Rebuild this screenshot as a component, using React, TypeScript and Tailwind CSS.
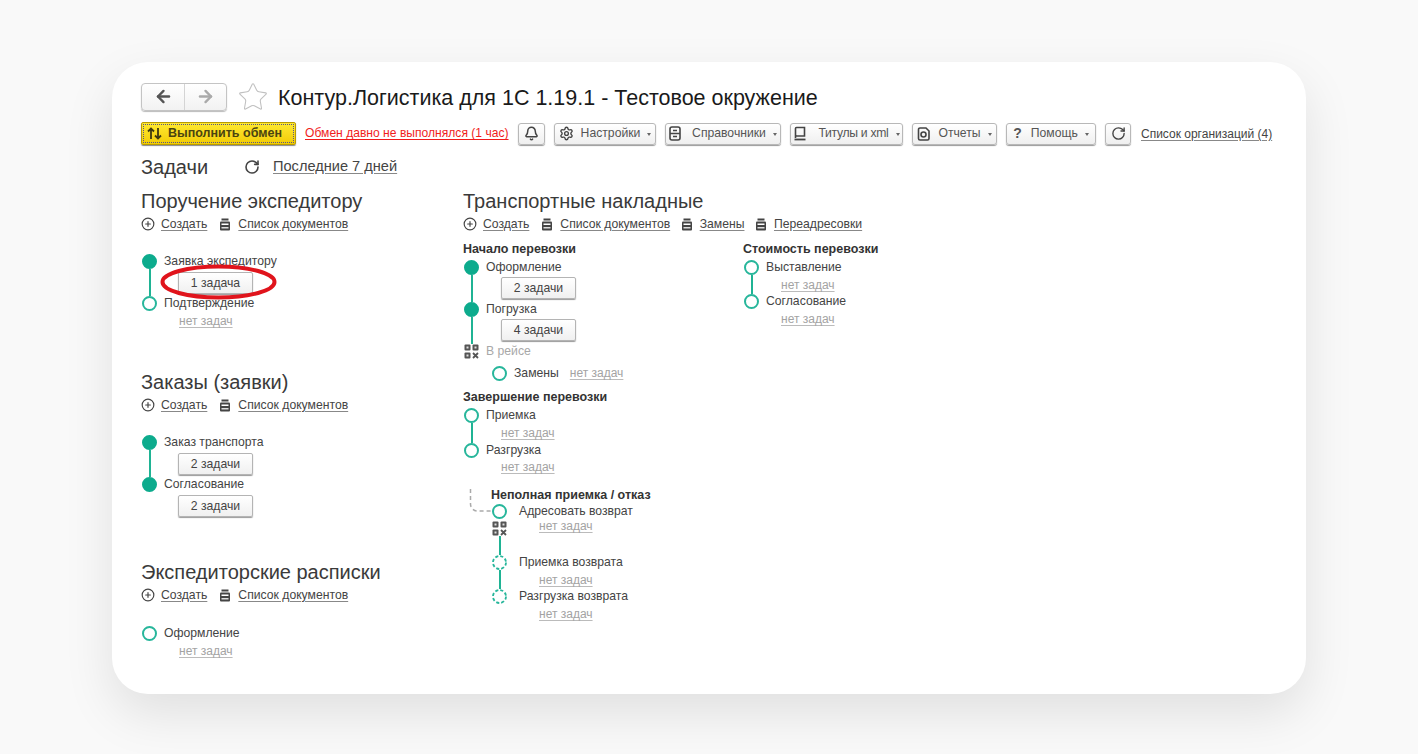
import { ArrowLeft, ArrowRight, Bell, CirclePlus, RotateCw, Settings, Star } from "lucide-react";
import type { ReactNode } from "react";

const DocsIcon = () => (
  <svg width="12" height="13" viewBox="0 0 12 13" className="shrink-0" fill="none">
    <rect x="2.5" y="0.5" width="7" height="2" fill="#444" />
    <rect x="1" y="3.5" width="10" height="9" rx="1" fill="#444" />
    <rect x="2.5" y="5.5" width="7" height="1.5" fill="#fff" />
    <rect x="2.5" y="9" width="7" height="1.5" fill="#ddd" />
  </svg>
);

const BookIcon = () => (
  <svg width="14" height="15" viewBox="0 0 14 15" fill="none" stroke="#444" strokeWidth="1.6" className="shrink-0">
    <path d="M2.5 12V2.5a1 1 0 0 1 1-1h8V10h-8a1 1 0 0 0-1 1.2" />
    <path d="M1.5 13.5h11" strokeWidth="1.8" />
  </svg>
);

const CabinetIcon = () => (
  <svg width="12" height="15" viewBox="0 0 12 15" fill="none" className="shrink-0">
    <rect x="1" y="1" width="10" height="13" rx="2" stroke="#444" strokeWidth="1.6" />
    <path d="M1 7.5h10M4 4.5h4M4 10.5h4" stroke="#444" strokeWidth="1.5" />
  </svg>
);

const ReportIcon = () => (
  <svg width="13" height="14" viewBox="0 0 13 14" fill="none" className="shrink-0">
    <path d="M3 1h6l3 3v7.5a1.500 1.500 0 0 1-1.500 1.500h-7.500a1.500 1.500 0 0 1-1.500-1.500v-9a1.500 1.500 0 0 1 1.500-1.500z" stroke="#444" strokeWidth="1.600" />
    <circle cx="6.500" cy="7.500" r="2.500" stroke="#444" strokeWidth="1.600" />
  </svg>
);

const ExchangeIcon = () => (
  <svg width="15" height="13" viewBox="0 0 15 13" fill="none" stroke="#3f3a10" strokeWidth="1.800" className="shrink-0">
    <path d="M4 12V1.500M1 4.500l3-3 3 3" />
    <path d="M11 1v10.500M8 8.500l3 3 3-3" />
  </svg>
);

const QrIcon = () => (
  <svg width="15" height="15" viewBox="0 0 15 15" fill="none" className="shrink-0">
    <g fill="#555">
      <rect x="0.500" y="0.500" width="6" height="6" rx="1" />
      <rect x="8.500" y="0.500" width="6" height="6" rx="1" />
      <rect x="0.500" y="8.500" width="6" height="6" rx="1" />
    </g>
    <g fill="#ddd">
      <rect x="2.500" y="2.500" width="2" height="2" />
      <rect x="10.500" y="2.500" width="2" height="2" />
      <rect x="2.500" y="10.500" width="2" height="2" />
    </g>
    <path d="M9 9l5 5M14 9l-5 5" stroke="#555" strokeWidth="1.800" />
  </svg>
);

const DashedRing = () => (
  <svg width="15" height="15" viewBox="0 0 15 15" fill="none" className="shrink-0">
    <circle cx="7.500" cy="7.500" r="6.500" stroke="#27b69b" strokeWidth="1.800" strokeDasharray="3.100 2" />
  </svg>
);

const Caret = () => <span className="ml-[7px] mt-[1px] h-0 w-0 border-x-[2.5px] border-t-[3px] border-x-transparent border-t-[#666]" />;

const ToolButton = ({
  icon,
  label,
  w,
  gap = "ml-[8px]",
}: {
  icon: ReactNode;
  label?: string;
  w: string;
  gap?: string;
}) => (
  <button className={`${w} flex h-[22px] shrink-0 items-center justify-center rounded-[3px] border border-[#b8b8b8] bg-gradient-to-b from-white to-[#efefef] text-[12.2px] text-[#555] shadow-[0_1px_1px_#999]`}>
    {icon}
    {label && <span className={`${gap} whitespace-nowrap`}>{label}</span>}
    {label && <Caret />}
  </button>
);

const Link = ({ children, className = "text-[12.2px]" }: { children: ReactNode; className?: string }) => (
  <a className={`whitespace-nowrap text-[#444] underline decoration-[#888] underline-offset-2 ${className}`}>{children}</a>
);

const NoTasks = ({ className = "" }: { className?: string }) => (
  <a className={`block whitespace-nowrap text-[12px] leading-[15px] text-[#a3a3a3] underline decoration-[#bbb] underline-offset-2 ${className}`}>нет задач</a>
);

type NodeKind = "filled" | "open" | "dashed" | "qr";

const Node = ({ kind }: { kind: NodeKind }) => {
  if (kind === "qr") return <QrIcon />;
  if (kind === "dashed") return <DashedRing />;
  const style = kind === "filled" ? "bg-[#0dab8d] border-[#0dab8d]" : "border-[#27b69b] bg-white";
  return <span className={`h-[15px] w-[15px] shrink-0 rounded-full border-2 ${style}`} />;
};

// one point of a timeline, the left rail stretches down to the next point
const Step = ({
  kind,
  label,
  h,
  line = false,
  muted = false,
  gap = "ml-[6px]",
  children,
}: {
  kind: NodeKind;
  label: string;
  h: string;
  line?: boolean;
  muted?: boolean;
  gap?: string;
  children?: ReactNode;
}) => (
  <div className={`flex ${h}`}>
    <div className="flex w-[17px] shrink-0 flex-col items-center">
      <Node kind={kind} />
      {line && <span className="w-[2px] flex-1 bg-[#1fb394]" />}
    </div>
    <div className={`${gap} min-w-0 flex-1`}>
      <div className={`whitespace-nowrap text-[12.2px] leading-[14px] ${muted ? "text-[#a8a8a8]" : "text-[#444]"}`}>{label}</div>
      {children}
    </div>
  </div>
);

const TaskButton = ({ label, className = "" }: { label: string; className?: string }) => (
  <button className={`flex h-[22px] w-[75px] items-center justify-center rounded-[2px] border border-[#b4b4b4] bg-gradient-to-b from-white to-[#f0f0f0] text-[12.2px] text-[#444] shadow-[0_1px_1px_#999] ${className}`}>
    {label}
  </button>
);

const Actions = ({ extra = [] }: { extra?: string[] }) => (
  <div className="mt-[3px] flex h-[16px] items-center">
    <CirclePlus size={14} strokeWidth={2} color="#444" className="mr-[6px] shrink-0" />
    <Link>Создать</Link>
    <span className="ml-[12px] mr-[7px]"><DocsIcon /></span>
    <Link>Список документов</Link>
    {extra.map((name) => (
      <span key={name} className="flex items-center">
        <span className="ml-[10.5px] mr-[7px]"><DocsIcon /></span>
        <Link>{name}</Link>
      </span>
    ))}
  </div>
);

const Heading = ({ children }: { children: ReactNode }) => (
  <h2 className="whitespace-nowrap text-[20px] leading-[24px] text-[#3a3a3a]">{children}</h2>
);

const Sub = ({ children }: { children: ReactNode }) => (
  <h3 className="whitespace-nowrap text-[12.5px] font-bold leading-[15px] text-[#333]">{children}</h3>
);

export default function App() {
  return (
    <div className="h-[754px] overflow-hidden bg-[#f9f9f9] pt-[62px] font-['Liberation_Sans',Arial,sans-serif]">
      <div className="mx-auto h-[632px] w-[1194px] rounded-[36px] bg-white pl-[29px] pr-[20px] pt-[20px] shadow-[0_20px_50px_rgba(0,0,0,0.1)]">
        <div className="flex h-[29px] items-center">
          <div className="flex h-[28px] w-[86px] items-center rounded-[4px] border border-[#c4c4c4] bg-gradient-to-b from-white to-[#f2f2f2] shadow-[0_1px_1px_#bbb]">
            <div className="flex h-full w-[43px] items-center justify-center border-r border-[#d4d4d4]">
              <ArrowLeft size={19} strokeWidth={3} color="#555" />
            </div>
            <div className="flex h-full flex-1 items-center justify-center">
              <ArrowRight size={19} strokeWidth={3} color="#aaa" />
            </div>
          </div>
          <Star size={32} strokeWidth={0.8} color="#c0c0c0" className="ml-[10px]" />
          <h1 className="ml-[9px] mt-[3px] whitespace-nowrap text-[21.5px] text-[#1a1a1a]">Контур.Логистика для 1С 1.19.1 - Тестовое окружение</h1>
        </div>

        <div className="mt-[11px] flex h-[23px] items-center">
          <button className="flex h-[23px] w-[155px] shrink-0 items-center rounded-[2px] border border-[#b89b00] bg-gradient-to-b from-[#ffe92e] to-[#f2cc00] pl-[5px] text-[12.5px] font-bold text-[#4a4410] shadow-[0_1px_1px_#888] outline-dotted outline-1 -outline-offset-3 outline-[#55558a]">
            <ExchangeIcon />
            <span className="ml-[6px]">Выполнить обмен</span>
          </button>
          <a className="ml-[9px] w-[213px] shrink-0 whitespace-nowrap text-[12.1px] text-[#f01c1c] underline underline-offset-2">Обмен давно не выполнялся (1 час)</a>
          <div className="flex items-center gap-[9px]">
            <ToolButton w="w-[27px]" icon={<Bell size={15} strokeWidth={2.400} color="#444" />} />
            <ToolButton w="w-[102px]" gap="ml-[7px]" icon={<Settings size={15} strokeWidth={2.200} color="#444" />} label="Настройки" />
            <ToolButton w="w-[116px]" gap="ml-[11px]" icon={<CabinetIcon />} label="Справочники" />
            <ToolButton w="w-[113px]" gap="ml-[11px] tracking-[-0.3px]" icon={<BookIcon />} label="Титулы и xml" />
            <ToolButton w="w-[85px]" icon={<ReportIcon />} label="Отчеты" />
            <ToolButton w="w-[90px]" gap="ml-[9px]" icon={<span className="text-[14px] font-bold text-[#555]">?</span>} label="Помощь" />
            <ToolButton w="w-[26px]" icon={<RotateCw size={15} strokeWidth={2.200} color="#444" />} />
          </div>
          <Link className="ml-[10px] text-[12px]">Список организаций (4)</Link>
        </div>

        <div className="mt-[10px] flex h-[24px] items-center">
          <span className="w-[103px] text-[20px] text-[#3a3a3a]">Задачи</span>
          <RotateCw size={16} strokeWidth={2.400} color="#444" />
          <Link className="ml-[13px] text-[14.6px]">Последние 7 дней</Link>
        </div>

        <div className="mt-[10px] flex">
          <div className="w-[322px] shrink-0">
            <section className="h-[181px]">
              <Heading>Поручение экспедитору</Heading>
              <Actions />
              <div className="relative mt-[22px]">
                <Step kind="filled" label="Заявка экспедитору" h="h-[42px]" line>
                  <TaskButton label="1 задача" className="ml-[14px] mt-[4px]" />
                </Step>
                <Step kind="open" label="Подтверждение" h="h-[42px]">
                  <NoTasks className="ml-[15px] mt-[4px]" />
                </Step>
                <svg width="118" height="36" viewBox="0 0 118 36" fill="none" className="absolute left-[19px] top-[10px]">
                  <ellipse cx="58.500" cy="18" rx="56" ry="15.500" stroke="#e0141c" strokeWidth="4" />
                </svg>
              </div>
            </section>
            <section className="h-[190px]">
              <Heading>Заказы (заявки)</Heading>
              <Actions />
              <div className="mt-[22px]">
                <Step kind="filled" label="Заказ транспорта" h="h-[42px]" line>
                  <TaskButton label="2 задачи" className="ml-[14px] mt-[4px]" />
                </Step>
                <Step kind="filled" label="Согласование" h="h-[42px]">
                  <TaskButton label="2 задачи" className="ml-[14px] mt-[4px]" />
                </Step>
              </div>
            </section>
            <section>
              <Heading>Экспедиторские расписки</Heading>
              <Actions />
              <div className="mt-[23px]">
                <Step kind="open" label="Оформление" h="h-[42px]">
                  <NoTasks className="ml-[15px] mt-[4px]" />
                </Step>
              </div>
            </section>
          </div>

          <div className="flex-1">
            <Heading>Транспортные накладные</Heading>
            <Actions extra={["Замены", "Переадресовки"]} />
            <div className="mt-[10px] flex">
              <div className="w-[280px] shrink-0">
                <Sub>Начало перевозки</Sub>
                <div className="mt-[3px]">
                  <Step kind="filled" label="Оформление" h="h-[42px]" line>
                    <TaskButton label="2 задачи" className="ml-[15px] mt-[3px]" />
                  </Step>
                  <Step kind="filled" label="Погрузка" h="h-[42px]" line>
                    <TaskButton label="4 задачи" className="ml-[15px] mt-[3px]" />
                  </Step>
                  <Step kind="qr" label="В рейсе" h="h-[22px]" muted />
                </div>
                <div className="flex h-[24px] items-start pl-[29px]">
                  <Node kind="open" />
                  <span className="ml-[7px] text-[12.2px] leading-[14px] text-[#444]">Замены</span>
                  <NoTasks className="ml-[11px]" />
                </div>
                <Sub>Завершение перевозки</Sub>
                <div className="mt-[3px]">
                  <Step kind="open" label="Приемка" h="h-[35px]" line>
                    <NoTasks className="ml-[15px] mt-[4px]" />
                  </Step>
                  <Step kind="open" label="Разгрузка" h="h-[45px]">
                    <NoTasks className="ml-[15px] mt-[3px]" />
                  </Step>
                </div>
                <div className="relative pl-[28px]">
                  <Sub>Неполная приемка / отказ</Sub>
                  <svg width="30" height="28" viewBox="0 0 30 28" fill="none" className="absolute left-[6px] top-[0px]">
                    <path d="M1.500 1v15a7 7 0 0 0 7 7h14" stroke="#aaa" strokeWidth="1.500" strokeDasharray="4 3" />
                  </svg>
                  <div className="mt-[1px]">
                    <Step kind="open" label="Адресовать возврат" h="h-[17px]" gap="ml-[11px]">
                      <NoTasks className="ml-[20px] mt-[1px]" />
                    </Step>
                    <Step kind="qr" label="" h="h-[34px]" line />
                    <Step kind="dashed" label="Приемка возврата" h="h-[34px]" line gap="ml-[11px]">
                      <NoTasks className="ml-[20px] mt-[4px]" />
                    </Step>
                    <Step kind="dashed" label="Разгрузка возврата" h="h-[34px]" gap="ml-[11px]">
                      <NoTasks className="ml-[20px] mt-[4px]" />
                    </Step>
                  </div>
                </div>
              </div>

              <div className="w-[200px] shrink-0">
                <Sub>Стоимость перевозки</Sub>
                <div className="mt-[3px]">
                  <Step kind="open" label="Выставление" h="h-[34px]" line>
                    <NoTasks className="ml-[15px] mt-[4px]" />
                  </Step>
                  <Step kind="open" label="Согласование" h="h-[34px]">
                    <NoTasks className="ml-[15px] mt-[4px]" />
                  </Step>
                </div>
              </div>
            </div>
          </div>
        </div>
      </div>
    </div>
  );
}
